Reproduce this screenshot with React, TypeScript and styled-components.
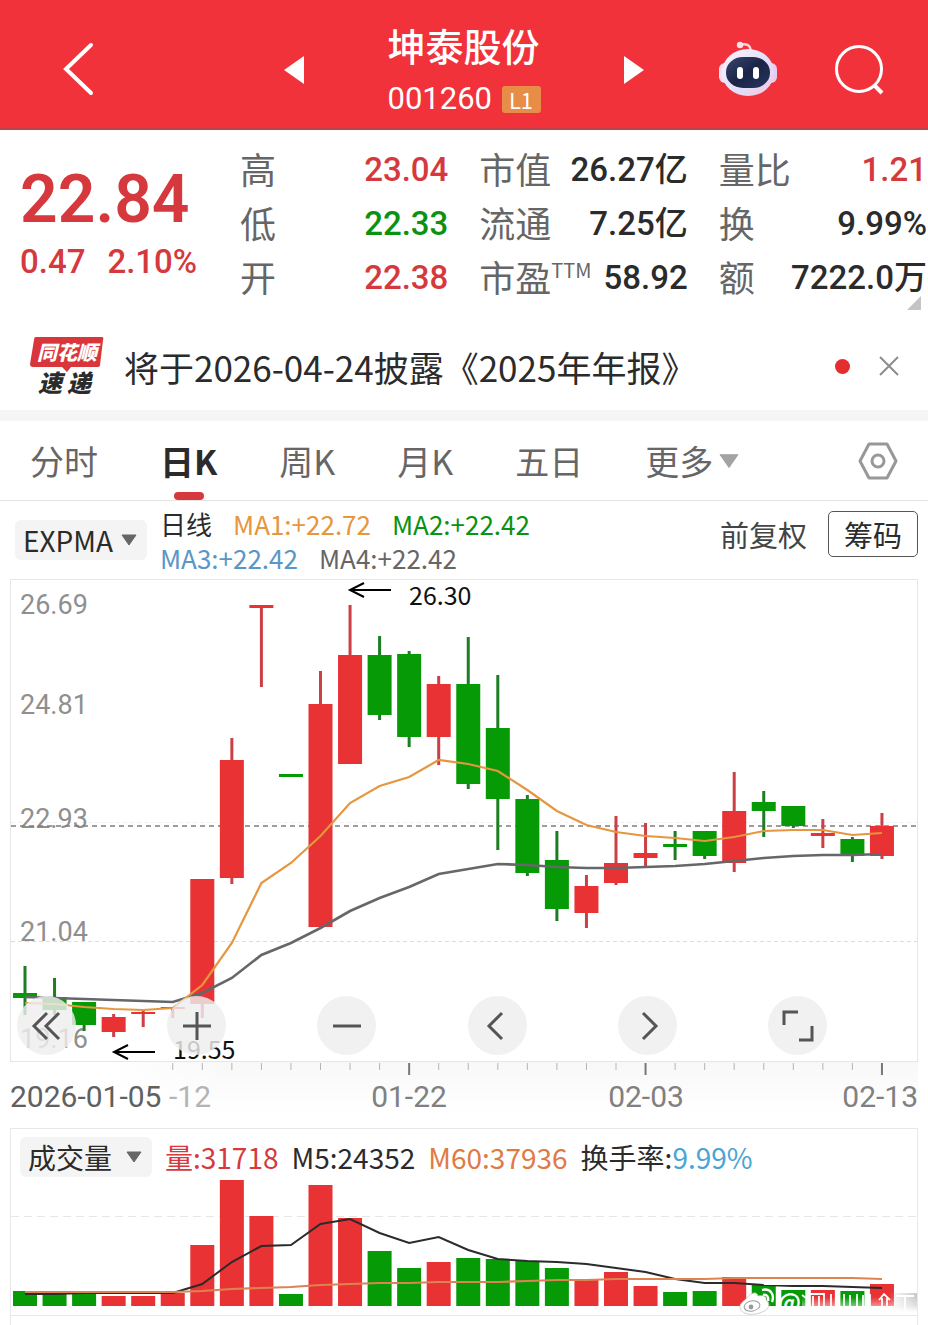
import React from "react";
import styled, { createGlobalStyle } from "styled-components";

const RED = "#e83234";
const GREEN = "#069a06";
const TEXT_RED = "#d5393d";
const TEXT_GREEN = "#0b920f";
const INK = "#2b2b2b";
const GREY = "#666666";
const ORANGE = "#e5963e";
const SLATE = "#66676a";

const cjk = `"Noto Sans CJK SC", sans-serif`;
const digits = `Roboto, "Noto Sans CJK SC", sans-serif`;

const GlobalStyle = createGlobalStyle`
  * { box-sizing: border-box; }
  body {
    margin: 0;
    background: #ffffff;
    color: ${INK};
    font-family: ${cjk};
  }
  button, select {
    margin: 0;
    padding: 0;
    border: 0;
    background: none;
    color: inherit;
    font: inherit;
    cursor: pointer;
  }
  h1, p, dl, dd, dt { margin: 0; font-weight: inherit; }
  svg { display: block; overflow: visible; }
`;

/* ---------- header ---------- */

const Header = styled.header`
  display: grid;
  grid-template-columns: 1fr auto 1fr;
  align-items: center;
  height: 130px;
  padding-top: 10px;
  background: #f1323a;
  border-bottom: 2px solid #b8474c;
  color: #ffffff;
`;

const BackButton = styled.button`
  display: flex;
  justify-content: center;
  width: 156px;
`;

const Switcher = styled.div`
  display: flex;
  align-items: center;
  justify-content: space-between;
  width: 360px;
`;

const StockTitle = styled.div`
  width: 153px;
  padding-top: 12px;
`;

const StockName = styled.h1`
  font-size: 38px;
  font-weight: 500;
  line-height: 46px;
  white-space: nowrap;
`;

const StockCode = styled.div`
  display: flex;
  align-items: center;
  justify-content: space-between;
  font: 400 31px/62px ${digits};
`;

const LevelBadge = styled.span`
  width: 39px;
  border-radius: 3px;
  background: #e88d47;
  font: 400 22px/27px ${cjk};
  text-align: center;
`;

const HeaderTools = styled.div`
  display: flex;
  align-items: center;
  justify-content: flex-end;
  gap: 56px;
  padding-right: 44px;
`;

/* ---------- quote ---------- */

const Quote = styled.section`
  display: grid;
  grid-template-columns: 220px 1fr;
  padding: 13px 1px 5px 20px;
  position: relative;
`;

const PriceBlock = styled.div`
  padding-top: 20px;
  color: ${TEXT_RED};
  font-family: ${digits};
`;

const Price = styled.p`
  font-size: 66px;
  font-weight: 600;
  line-height: 74px;
`;

const Change = styled.p`
  display: flex;
  gap: 22px;
  font-size: 33px;
  font-weight: 500;
  line-height: 50px;
`;

const Stats = styled.div`
  display: grid;
  grid-template-columns: repeat(3, 1fr);
  column-gap: 31px;
`;

const StatColumn = styled.dl``;

const Stat = styled.div`
  display: flex;
  align-items: flex-start;
  justify-content: space-between;
  height: 54px;
  white-space: nowrap;
`;

const StatLabel = styled.dt`
  display: flex;
  align-items: flex-start;
  color: ${GREY};
  font-size: 36px;
  line-height: 50px;
`;

const Suffix = styled.small`
  font-size: 20px;
  line-height: 38px;
`;

const StatValue = styled.dd<{ $color?: string }>`
  color: ${(p) => p.$color ?? INK};
  font: 500 33px/54px ${digits};
`;

const Corner = styled.svg`
  position: absolute;
  right: 7px;
  bottom: 0;
`;

/* ---------- news ---------- */

const News = styled.section`
  display: flex;
  align-items: center;
  height: 100px;
  padding: 12px 28px 0 30px;
`;

const NewsText = styled.p`
  flex: 1;
  margin-left: 20px;
  font-size: 35px;
  white-space: nowrap;
`;

const Dot = styled.span`
  width: 15px;
  height: 15px;
  margin-right: 28px;
  border-radius: 50%;
  background: #e52d2f;
`;

/* ---------- period tabs ---------- */

const Tabs = styled.nav`
  display: flex;
  align-items: center;
  justify-content: space-between;
  height: 91px;
  padding: 0 30px;
  border-top: 11px solid #f5f5f5;
  border-bottom: 1px solid #e4e4e4;
`;

const TabList = styled.div`
  display: flex;
  gap: 62px;
  height: 100%;
`;

const Tab = styled.button<{ $active?: boolean }>`
  position: relative;
  display: flex;
  align-items: center;
  gap: 6px;
  color: ${(p) => (p.$active ? INK : GREY)};
  font-size: 34px;
  font-weight: ${(p) => (p.$active ? 700 : 400)};
  white-space: nowrap;

  &::after {
    content: "";
    display: ${(p) => (p.$active ? "block" : "none")};
    position: absolute;
    bottom: 0;
    left: 50%;
    width: 30px;
    height: 8px;
    margin-left: -15px;
    border-radius: 4px;
    background: ${TEXT_RED};
  }
`;

/* ---------- indicators ---------- */

const IndicatorBar = styled.section`
  display: flex;
  align-items: center;
  height: 78px;
  padding: 0 10px 0 15px;
`;

const Picker = styled.div`
  position: relative;
  width: 132px;
  flex: none;

  select {
    width: 100%;
    height: 40px;
    padding-left: 8px;
    appearance: none;
    border-radius: 6px;
    background: #f4f4f4;
    font-size: 28px;
    line-height: 40px;
  }

  svg {
    position: absolute;
    top: 14px;
    right: 10px;
    pointer-events: none;
  }
`;

const Legend = styled.div`
  flex: 1;
  margin-left: 13px;
  padding-top: 2px;
  font-size: 26px;
  line-height: 34px;
`;

const LegendLine = styled.div`
  display: flex;
  gap: 21px;
  white-space: nowrap;
`;

const Tone = styled.span<{ $color: string }>`
  color: ${(p) => p.$color};
`;

const Actions = styled.div`
  display: flex;
  align-items: center;
  gap: 21px;
  padding-bottom: 12px;
`;

const AdjustButton = styled.button`
  color: #444444;
  font-size: 29px;
  line-height: 42px;
`;

const ChipsButton = styled.button`
  width: 90px;
  height: 46px;
  border: 1px solid #555555;
  border-radius: 5px;
  font-size: 29px;
  line-height: 42px;
`;

/* ---------- charts ---------- */

const ChartArea = styled.section`
  position: relative;
  margin: 0 10px;
`;

const Plot = styled.svg`
  width: 100%;
  height: auto;
`;

const ChartControls = styled.div`
  position: absolute;
  top: 76%;
  left: 7px;
  right: 10%;
  display: flex;
  justify-content: space-between;
`;

const RoundButton = styled.button`
  display: grid;
  place-items: center;
  width: 59px;
  height: 59px;
  border-radius: 50%;
  background: rgba(238, 238, 238, 0.82);
`;

const VolumePanel = styled.section`
  position: relative;
  margin: 0 10px;
  border: 1px solid #e8e8e8;
`;

const VolumeHead = styled.div`
  display: flex;
  align-items: center;
  gap: 13px;
  height: 50px;
  padding: 6px 9px 0;
  font-size: 28px;
  line-height: 40px;
  white-space: nowrap;
`;

const NextPanel = styled.div`
  height: 9px;
  margin: 0 10px;
  border: solid #e8e8e8;
  border-width: 0 1px;
`;

const Watermark = styled.svg`
  position: absolute;
  right: 0;
  bottom: -8px;
`;

/* ---------- data ---------- */

const STEP = 29.55;
const cx = (i: number) => 25 + STEP * i;

type Candle = [high: number, top: number, bottom: number, low: number, up: 0 | 1];

const candles: Candle[] = [
  [966, 993, 998, 1015, 0],
  [978, 997, 1010, 1015, 0],
  [1002, 1002, 1025, 1031, 0],
  [1014, 1017, 1032, 1037, 1],
  [1009, 1012, 1014, 1027, 1],
  [1007, 1007, 1009, 1018, 1],
  [879, 879, 1004, 1018, 1],
  [738, 760, 878, 884, 1],
  [605, 605, 608, 687, 1],
  [774, 774, 777, 777, 0],
  [671, 704, 927, 927, 1],
  [605, 655, 764, 764, 1],
  [636, 655, 715, 720, 0],
  [651, 654, 737, 747, 0],
  [676, 684, 737, 765, 1],
  [637, 684, 784, 789, 0],
  [675, 728, 799, 850, 0],
  [795, 799, 873, 876, 0],
  [831, 860, 909, 921, 0],
  [875, 886, 913, 928, 1],
  [816, 863, 883, 885, 1],
  [823, 853, 858, 867, 1],
  [831, 844, 847, 860, 0],
  [831, 831, 856, 859, 0],
  [772, 811, 863, 872, 1],
  [791, 802, 811, 837, 0],
  [806, 806, 826, 828, 0],
  [819, 833, 836, 848, 1],
  [837, 839, 856, 862, 0],
  [813, 826, 856, 859, 1],
];

const fastLine = [
  1003, 1004, 1007, 1009, 1010, 1008, 985, 943, 883, 863, 836, 803, 786, 777, 760,
  764, 771, 790, 811, 825, 832, 836, 838, 841, 837, 831, 830, 830, 835, 833,
];

const slowLine = [
  997, 998, 999, 1000, 1001, 1002, 993, 978, 955, 943, 928, 911, 898, 887, 874,
  869, 864, 865, 867, 868, 868, 867, 866, 864, 861, 858, 856, 855, 855, 854,
];

const volumeTops = [
  1291, 1293, 1294, 1296, 1296, 1293, 1245, 1180, 1216, 1294, 1185, 1218, 1251, 1268, 1262,
  1258, 1259, 1261, 1268, 1279, 1272, 1286, 1292, 1291, 1277, 1285, 1290, 1290, 1291, 1284,
];

const volumeFast = [
  1294, 1294, 1293, 1293, 1293, 1293, 1284, 1262, 1246, 1245, 1224, 1219, 1233, 1243, 1237,
  1250, 1259, 1261, 1262, 1264, 1268, 1272, 1279, 1283, 1283, 1285, 1286, 1286, 1287, 1288,
];

const volumeSlow = [
  1292, 1292, 1292, 1292, 1292, 1292, 1291, 1289, 1288, 1287, 1285, 1284, 1283, 1283, 1282,
  1282, 1282, 1281, 1280, 1280, 1279, 1279, 1279, 1279, 1278, 1278, 1278, 1278, 1278, 1279,
];

const toPoints = (ys: number[]) => ys.map((y, i) => `${cx(i)},${y}`).join(" ");

const statColumns: { label: string; suffix?: string; value: string; color?: string }[][] = [
  [
    { label: "高", value: "23.04", color: TEXT_RED },
    { label: "低", value: "22.33", color: TEXT_GREEN },
    { label: "开", value: "22.38", color: TEXT_RED },
  ],
  [
    { label: "市值", value: "26.27亿" },
    { label: "流通", value: "7.25亿" },
    { label: "市盈", suffix: "TTM", value: "58.92" },
  ],
  [
    { label: "量比", value: "1.21", color: TEXT_RED },
    { label: "换", value: "9.99%" },
    { label: "额", value: "7222.0万" },
  ],
];

/* ---------- drawings ---------- */

const Caret = ({ color = "#666666", w = 16, h = 12 }) => (
  <svg width={w} height={h} viewBox="0 0 16 12" aria-hidden="true">
    <path d="M1 1h14L8 11z" fill={color} stroke={color} strokeLinejoin="round" />
  </svg>
);

const RobotIcon = () => (
  <svg width="60" height="62" viewBox="0 0 60 62" aria-hidden="true">
    <defs>
      <linearGradient id="shell" x1="0" y1="0" x2="1" y2="1">
        <stop offset="0" stopColor="#fff4fb" />
        <stop offset="0.55" stopColor="#dfe0fb" />
        <stop offset="1" stopColor="#f6c6de" />
      </linearGradient>
      <linearGradient id="visor" x1="0" y1="0" x2="1" y2="1">
        <stop offset="0" stopColor="#39456f" />
        <stop offset="0.5" stopColor="#1b2447" />
        <stop offset="1" stopColor="#27345f" />
      </linearGradient>
    </defs>
    <path d="M22 6c7-2 10 0 11 6" fill="none" stroke="#ffd5dc" strokeWidth="2.4" />
    <circle cx="22" cy="6" r="3.2" fill="#ffe0e5" />
    <rect x="1" y="24" width="12" height="20" rx="6" fill="#f9dcee" />
    <rect x="47" y="24" width="12" height="20" rx="6" fill="#e6cdf0" />
    <rect x="4" y="10" width="52" height="47" rx="26" ry="23" fill="url(#shell)" />
    <rect x="8" y="18" width="44" height="31" rx="17" ry="15" fill="url(#visor)" />
    <rect x="19" y="28" width="6" height="12" rx="3" fill="#ffffff" />
    <rect x="35" y="28" width="6" height="12" rx="3" fill="#ffffff" />
  </svg>
);

const BrandLogo = () => (
  <svg width="74" height="72" viewBox="0 -5 74 72" role="img" aria-label="同花顺速递">
    <path d="M6 2h66q2 0 1 3l-3 25q0 2-3 2H41l-4 5-5-5H3q-3 0-3-3L4 5q0-3 2-3z" fill="#d9363b" />
    <text x="7" y="25" fill="#ffffff" fontFamily={cjk} fontSize="20" fontWeight="900" fontStyle="italic">
      同花顺
    </text>
    <text x="8" y="57" fill={INK} fontFamily={cjk} fontSize="24" fontWeight="900" fontStyle="italic">
      速
    </text>
    <text x="37" y="57" fill={INK} fontFamily={cjk} fontSize="24" fontWeight="900" fontStyle="italic">
      递
    </text>
  </svg>
);

const controlIcons: { label: string; d: string }[] = [
  { label: "最早", d: "M20 7 7 20l13 13M32 7 19 20l13 13" },
  { label: "放大", d: "M20 6v28M6 20h28" },
  { label: "缩小", d: "M6 20h28" },
  { label: "向前", d: "M25 7 12 20l13 13" },
  { label: "向后", d: "M16 7l13 13-13 13" },
  { label: "全屏", d: "M6 19V6h14M34 20v14H21" },
];

const PriceChart = () => (
  <Plot viewBox="10 579 908 549" role="img" aria-label="日K线">
    <defs>
      <linearGradient id="axisShade" x1="0" y1="0" x2="0" y2="1">
        <stop offset="0" stopColor="#f8f8f8" />
        <stop offset="1" stopColor="#ffffff" />
      </linearGradient>
      <linearGradient id="axisFade" x1="0" y1="0" x2="1" y2="0">
        <stop offset="0" stopColor="#ffffff" />
        <stop offset="1" stopColor="#ffffff" stopOpacity="0" />
      </linearGradient>
    </defs>
    <rect x="110" y="1062" width="808" height="50" fill="url(#axisShade)" />
    <rect x="109" y="1062" width="120" height="50" fill="url(#axisFade)" />
    <rect x="10.5" y="579.5" width="907" height="482" fill="none" stroke="#e6e6e6" />
    <path d="M11 822.5h906" stroke="#f1f1f1" strokeDasharray="4 3" />
    <path d="M11 941.5h906" stroke="#dcdcdc" strokeDasharray="4 3" />
    <g fill="#8f8f8f" fontFamily={digits} fontSize="27">
      <text x="20" y="614">26.69</text>
      <text x="20" y="714">24.81</text>
      <text x="20" y="828">22.93</text>
      <text x="20" y="941">21.04</text>
      <text x="20" y="1048">19.16</text>
    </g>
    <path d="M11 826h906" stroke="#7d7d7d" strokeWidth="1.5" strokeDasharray="5 4" />
    {candles.map(([high, top, bottom, low, up], i) => (
      <g key={i} fill={up ? RED : GREEN}>
        <rect x={cx(i) - 1.5} y={high} width="3" height={low - high} fill={up ? "#cb3f45" : "#1c7d24"} />
        <rect x={cx(i) - 12} y={top} width="24" height={bottom - top} />
      </g>
    ))}
    <polyline points={toPoints(slowLine)} fill="none" stroke={SLATE} strokeWidth="2.6" />
    <polyline points={toPoints(fastLine)} fill="none" stroke={ORANGE} strokeWidth="2.2" />
    <g fill="none" stroke="#000000" strokeWidth="2">
      <path d="M391 590h-40M364 583l-14 7 14 7" />
      <path d="M155 1052h-40M128 1045l-14 7 14 7" />
    </g>
    <g fill="#111111" fontFamily={cjk} fontSize="25">
      <text x="409" y="605">26.30</text>
      <text x="173" y="1059">19.55</text>
    </g>
    {candles.map((_, i) => {
      const major = i > 5 && (i - 5) % 8 === 0;
      return i < 5 ? null : (
        <path
          key={i}
          d={`M${cx(i)} 1063v${major ? 12 : 7}`}
          stroke={major ? "#777777" : "#b5b5b5"}
          strokeWidth={major ? 2 : 1}
        />
      );
    })}
    <g fill="#808080" fontFamily={digits} fontSize="30">
      <text x="10" y="1107" fill="#606060">2026-01-05</text>
      <text x="211" y="1107" fill="#b4b4b4" textAnchor="end">-12</text>
      <text x="409" y="1107" textAnchor="middle">01-22</text>
      <text x="646" y="1107" textAnchor="middle">02-03</text>
      <text x="918" y="1107" textAnchor="end">02-13</text>
    </g>
  </Plot>
);

const VolumeChart = () => (
  <Plot viewBox="11 1179 906 136" role="img" aria-label="成交量">
    <path d="M11 1216.5h906" stroke="#e6e6e6" strokeDasharray="8 5" />
    {volumeTops.map((y, i) => (
      <rect key={i} x={cx(i) - 12} y={y} width="24" height={1306 - y} fill={candles[i][4] ? RED : GREEN} />
    ))}
    <polyline points={toPoints(volumeFast)} fill="none" stroke={INK} strokeWidth="2" />
    <polyline points={toPoints(volumeSlow)} fill="none" stroke="#dd8352" strokeWidth="2.2" />
  </Plot>
);

const WeiboMark = () => (
  <Watermark width="178" height="40" viewBox="740 1283 178 40" aria-hidden="true">
    <defs>
      <linearGradient id="smear" x1="0" y1="0" x2="0" y2="1">
        <stop offset="0" stopColor="#ffffff" stopOpacity="0" />
        <stop offset="0.6" stopColor="#ffffff" stopOpacity="0.45" />
        <stop offset="1" stopColor="#ffffff" />
      </linearGradient>
      <linearGradient id="smearGrey" x1="0" y1="0" x2="1" y2="0">
        <stop offset="0" stopColor="#c9c9c9" stopOpacity="0" />
        <stop offset="1" stopColor="#c9c9c9" />
      </linearGradient>
    </defs>
    <rect x="890" y="1293" width="28" height="19" fill="url(#smearGrey)" />
    <path
      d="M747 1299c5-7 11-8 12-3 5-1 9 0 8 4 5 3 3 10-4 12-8 4-20 3-22-4-1-3 2-6 6-9z"
      fill="#ffffff"
      stroke="#c4c4c4"
      strokeWidth="0.8"
    />
    <ellipse cx="753" cy="1306" rx="8" ry="5" fill="none" stroke="#9a9a9a" transform="rotate(-10 753 1306)" />
    <circle cx="752" cy="1307" r="2.4" fill="#9a9a9a" />
    <path d="M764 1295c4-1 6 2 5 6M763 1290c8-2 13 4 10 12" fill="none" stroke="#ffffff" strokeWidth="2.4" />
    <text x="779" y="1311" fill="#ffffff" stroke="#ffffff" strokeWidth="0.6" fontFamily={cjk} fontSize="24">
      @
    </text>
    <path
      d="M803 1295l4 3M811 1294h14v14M814 1296v12M820 1296v12M832 1294v14M838 1295v13M845 1294v14M851 1295v13M858 1294v14M864 1295v13M871 1294v14M880 1300l5-6 6 6M883 1298v12M888 1298v12M897 1296h18M906 1296v14"
      fill="none"
      stroke="#ffffff"
      strokeWidth="1.8"
    />
    <rect x="803" y="1297" width="115" height="15" fill="url(#smear)" />
  </Watermark>
);

export default function App() {
  return (
    <>
      <GlobalStyle />
      <Header>
        <BackButton aria-label="返回">
          <svg width="32" height="54" viewBox="0 0 32 54">
            <path d="M29 2 4 26l25 24" fill="none" stroke="#fff" strokeWidth="4" strokeLinecap="round" />
          </svg>
        </BackButton>
        <Switcher>
          <button aria-label="上一只">
            <svg width="20" height="28" viewBox="0 0 20 28">
              <path d="M0 14 20 0v28z" fill="#fff" />
            </svg>
          </button>
          <StockTitle>
            <StockName>坤泰股份</StockName>
            <StockCode>
              001260 <LevelBadge>L1</LevelBadge>
            </StockCode>
          </StockTitle>
          <button aria-label="下一只">
            <svg width="20" height="28" viewBox="0 0 20 28">
              <path d="M20 14 0 0v28z" fill="#fff" />
            </svg>
          </button>
        </Switcher>
        <HeaderTools>
          <button aria-label="智能助手">
            <RobotIcon />
          </button>
          <button aria-label="搜索">
            <svg width="50" height="50" viewBox="0 0 50 50" fill="none" stroke="#fff" strokeWidth="3">
              <circle cx="25" cy="24" r="22.5" />
              <path d="m40 40 8 8" strokeWidth="4" />
            </svg>
          </button>
        </HeaderTools>
      </Header>

      <Quote>
        <PriceBlock>
          <Price>22.84</Price>
          <Change>
            <span>0.47</span>
            <span>2.10%</span>
          </Change>
        </PriceBlock>
        <Stats>
          {statColumns.map((column, c) => (
            <StatColumn key={c}>
              {column.map((s) => (
                <Stat key={s.label}>
                  <StatLabel>
                    {s.label}
                    {s.suffix && <Suffix>{s.suffix}</Suffix>}
                  </StatLabel>
                  <StatValue $color={s.color}>{s.value}</StatValue>
                </Stat>
              ))}
            </StatColumn>
          ))}
        </Stats>
        <Corner width="14" height="14" viewBox="0 0 14 14" aria-hidden="true">
          <path d="M14 0v14H0z" fill="#c4c4c4" />
        </Corner>
      </Quote>

      <News>
        <BrandLogo />
        <NewsText>将于2026-04-24披露《2025年年报》</NewsText>
        <Dot />
        <button aria-label="关闭">
          <svg width="22" height="22" viewBox="0 0 22 22">
            <path d="m2 2 18 18M20 2 2 20" stroke="#8c8c8c" strokeWidth="2" />
          </svg>
        </button>
      </News>

      <Tabs>
        <TabList>
          <Tab>分时</Tab>
          <Tab $active>日K</Tab>
          <Tab>周K</Tab>
          <Tab>月K</Tab>
          <Tab>五日</Tab>
          <Tab aria-haspopup="menu">
            更多 <Caret color="#a3a3a3" w={20} h={16} />
          </Tab>
        </TabList>
        <button aria-label="设置">
          <svg width="40" height="38" viewBox="0 0 40 38" fill="none" stroke="#989898" strokeLinejoin="round">
            <path d="M11 2h18l9 17-9 17H11L2 19z" strokeWidth="3" />
            <circle cx="20" cy="19" r="6" strokeWidth="3" />
          </svg>
        </button>
      </Tabs>

      <IndicatorBar>
        <Picker>
          <select aria-label="主图指标" defaultValue="EXPMA">
            <option>EXPMA</option>
          </select>
          <Caret />
        </Picker>
        <Legend>
          <LegendLine>
            <span>日线</span>
            <Tone $color={ORANGE}>MA1:+22.72</Tone>
            <Tone $color={TEXT_GREEN}>MA2:+22.42</Tone>
          </LegendLine>
          <LegendLine>
            <Tone $color="#5a96c6">MA3:+22.42</Tone>
            <Tone $color={GREY}>MA4:+22.42</Tone>
          </LegendLine>
        </Legend>
        <Actions>
          <AdjustButton>前复权</AdjustButton>
          <ChipsButton>筹码</ChipsButton>
        </Actions>
      </IndicatorBar>

      <ChartArea>
        <PriceChart />
        <ChartControls>
          {controlIcons.map((icon) => (
            <RoundButton key={icon.label} aria-label={icon.label}>
              <svg width="40" height="40" viewBox="0 0 40 40">
                <path d={icon.d} fill="none" stroke="#555555" strokeWidth="3" />
              </svg>
            </RoundButton>
          ))}
        </ChartControls>
      </ChartArea>

      <VolumePanel>
        <VolumeHead>
          <Picker>
            <select aria-label="副图指标" defaultValue="成交量">
              <option>成交量</option>
            </select>
            <Caret />
          </Picker>
          <Tone $color={TEXT_RED}>量:31718</Tone>
          <Tone $color={INK}>M5:24352</Tone>
          <Tone $color="#e07a45">M60:37936</Tone>
          <Tone $color={INK}>
            换手率:<Tone $color="#4aa5d4">9.99%</Tone>
          </Tone>
        </VolumeHead>
        <VolumeChart />
        <WeiboMark />
      </VolumePanel>
      <NextPanel />
    </>
  );
}
